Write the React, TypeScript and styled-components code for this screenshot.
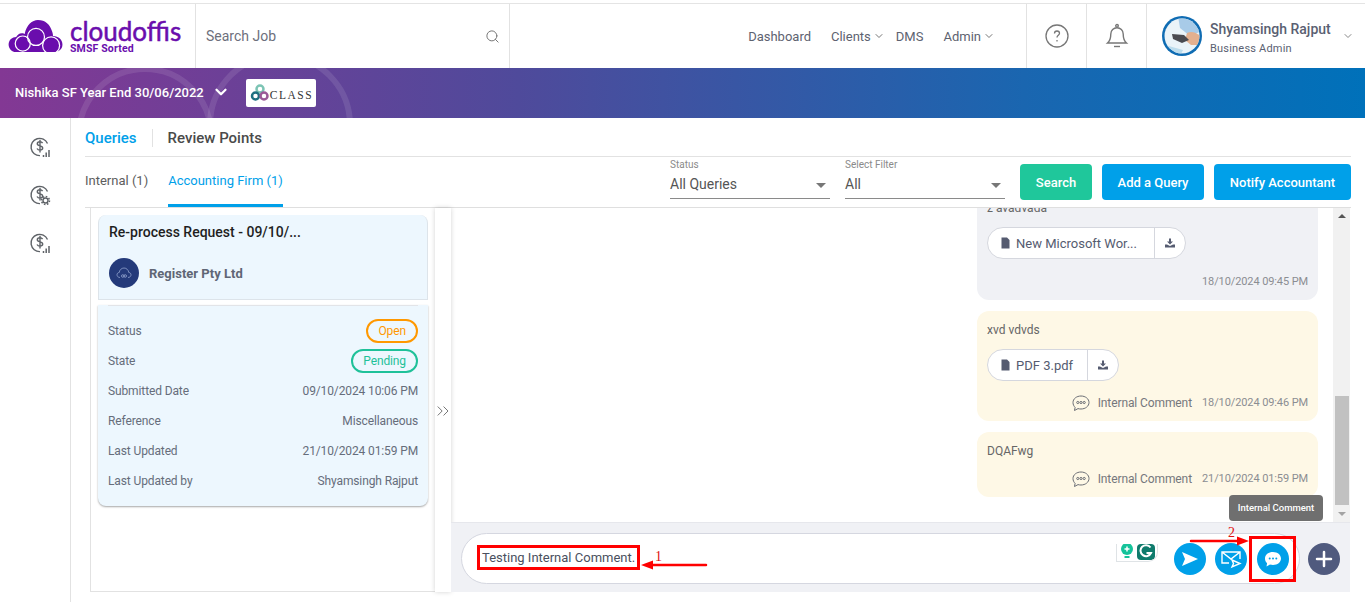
import React, { FC } from "react";
import styled, { createGlobalStyle } from "styled-components";
import { Search, ChevronDown, ChevronsRight, Plus } from "lucide-react";

const GlobalStyle = createGlobalStyle`
  html, body {
    margin: 0;
    padding: 0;
    background: #fff;
    font-family: Roboto, "Liberation Sans", sans-serif;
    overflow: hidden;
  }
  * { box-sizing: border-box; }
`;

const Page = styled.div`
  width: 1365px;
  height: 602px;
  display: flex;
  flex-direction: column;
  overflow: hidden;
`;

const Header = styled.header`
  margin-top: 3px;
  height: 65px;
  display: flex;
  border-top: 1px solid #e4e4e4;
  flex: none;
`;

const LogoCell = styled.div`
  width: 196px;
  padding: 14px 0 0 8px;
  display: flex;
  gap: 6px;
  border-right: 1px solid #e2e2e2;
`;

const LogoWords = styled.div`
  display: flex;
  flex-direction: column;
  margin-top: 1px;
`;

const LogoName = styled.div`
  font-family: Lato, sans-serif;
  font-size: 26px;
  font-weight: 400;
  line-height: 24px;
  color: #6a0dad;
  -webkit-text-stroke: 0.5px #6a0dad;
`;

const LogoTag = styled.div`
  font-size: 10.5px;
  font-weight: 700;
  line-height: 12px;
  color: #6a0dad;
  letter-spacing: 0.15px;
`;

const SearchCell = styled.div`
  width: 314px;
  padding: 0 9px 0 10px;
  display: flex;
  align-items: center;
  justify-content: space-between;
  border-right: 1px solid #e2e2e2;
  color: #6d6f7c;
  font-size: 14px;
`;

const Nav = styled.nav`
  flex: 1;
  display: flex;
  align-items: center;
  justify-content: flex-end;
  gap: 20px;
  padding-right: 40px;
  font-size: 13px;
  color: #5d6270;
`;

const NavItem = styled.span`
  display: inline-flex;
  align-items: center;
  gap: 2px;
`;

const NavChevron = styled(ChevronDown)`
  margin-right: -9px;
  color: #777;
`;

const IconCell = styled.div`
  width: 60px;
  flex: none;
  display: flex;
  align-items: center;
  justify-content: center;
  border-left: 1px solid #e2e2e2;
  color: #777;
`;

const UserCell = styled.div`
  width: 219px;
  flex: none;
  display: flex;
  align-items: center;
  padding-left: 15px;
  border-left: 1px solid #e2e2e2;
  gap: 8px;
  color: #5a5f72;
`;

const UserText = styled.div`
  display: flex;
  flex-direction: column;
  gap: 5px;
  width: 124px;
  margin-top: 4px;
`;

const UserName = styled.div`
  font-size: 14px;
  font-weight: 500;
  line-height: 16px;
  white-space: nowrap;
`;

const UserRole = styled.div`
  font-size: 11px;
  line-height: 13px;
  letter-spacing: 0.2px;
`;

const UserChevron = styled(ChevronDown)`
  color: #888;
`;

const Banner = styled.div`
  position: relative;
  height: 50px;
  flex: none;
  display: flex;
  align-items: center;
  padding-left: 15px;
  overflow: hidden;
  background: linear-gradient(90deg, #833894 0%, #4f4a9b 38%, #1a66b0 75%, #0071ba 100%);
`;

const BannerRings = styled.svg`
  position: absolute;
  left: 0;
  top: 0;
`;

const BannerTitle = styled.span`
  position: relative;
  margin-top: -2px;
  font-size: 13px;
  font-weight: 500;
  color: #fff;
`;

const BannerChevron = styled.span`
  position: relative;
  display: flex;
  margin: -2px 16px 0 8px;
  color: #fff;
`;

const ClassLogo = styled.div`
  position: relative;
  width: 70px;
  height: 28px;
  padding-left: 4px;
  display: flex;
  align-items: center;
  background: #fff;
  border-radius: 2px;
`;

const ClassWord = styled.span`
  font-family: "Liberation Serif", serif;
  font-size: 11.5px;
  letter-spacing: 1.5px;
  color: #333;
  margin-top: 4px;
`;

const Body = styled.div`
  flex: 1;
  display: flex;
  min-height: 0;
`;

const Sidebar = styled.aside`
  width: 71px;
  flex: none;
  padding: 18px 0 0 29px;
  display: flex;
  flex-direction: column;
  gap: 26px;
  border-right: 1px solid #e2e2e2;
`;

const Main = styled.main`
  flex: 1;
  min-width: 0;
  display: flex;
  flex-direction: column;
  padding: 0 14px 10px 14px;
`;

const TopTabs = styled.div`
  height: 39px;
  flex: none;
  display: flex;
  align-items: center;
  border-bottom: 1px solid #e2e2e2;
  font-size: 15px;
  font-weight: 500;
  padding-top: 1px;
`;

const TopTab = styled.span<{ $active?: boolean }>`
  color: ${(p) => (p.$active ? "#00a0e9" : "#4a4a4a")};
`;

const TabDivider = styled.span`
  width: 1px;
  height: 18px;
  margin: 0 15px;
  background: #e2e2e2;
`;

const FilterBar = styled.div`
  height: 51px;
  flex: none;
  display: flex;
  border-bottom: 1px solid #dfdfdf;
`;

const SubTab = styled.div<{ $active?: boolean }>`
  height: 50px;
  padding-top: 16px;
  margin-right: 20px;
  font-size: 13px;
  line-height: 16px;
  color: ${(p) => (p.$active ? "#00a0e9" : "#5d5d5d")};
  border-bottom: 3px solid ${(p) => (p.$active ? "#00a0e9" : "transparent")};
`;

const Filters = styled.div`
  margin-left: auto;
  display: flex;
  gap: 15px;
  padding-top: 1px;
`;

const Field = styled.div`
  width: 160px;
  height: 41px;
  padding-top: 1px;
  display: flex;
  flex-direction: column;
  border-bottom: 1px solid #8a8a8a;
`;

const FieldLabel = styled.div`
  font-size: 10px;
  line-height: 12px;
  color: #8a8a8a;
`;

const FieldValue = styled.div`
  margin-top: 4px;
  padding-right: 4px;
  display: flex;
  justify-content: space-between;
  align-items: center;
  font-size: 14px;
  line-height: 18px;
  color: #555;
`;

const Caret = styled.span`
  width: 0;
  height: 0;
  margin-top: 2px;
  border-left: 5px solid transparent;
  border-right: 5px solid transparent;
  border-top: 5px solid #777;
`;

const ActionButtons = styled.div`
  display: flex;
  gap: 10px;
  padding: 6px 0 0 0;
`;

const ActionButton = styled.button<{ $green?: boolean; $width: number }>`
  width: ${(p) => p.$width}px;
  height: 36px;
  border: 0;
  border-radius: 4px;
  background: ${(p) => (p.$green ? "#1fc79b" : "#00a0e9")};
  color: #fff;
  font-family: inherit;
  font-size: 13px;
  font-weight: 500;
  padding: 0;
`;

const Content = styled.div`
  flex: 1;
  min-height: 0;
  display: flex;
  padding: 0 1px 0 5px;
`;

const LeftPanel = styled.section`
  width: 345px;
  flex: none;
  padding: 7px 7px 0 7px;
  border-left: 1px solid #e2e2e2;
  border-bottom: 1px solid #e2e2e2;
`;

const CardHead = styled.div`
  height: 85px;
  padding: 10px 10px 0 10px;
  background: #edf7fe;
  border: 1px solid #dde4ea;
  border-top: 0;
  border-radius: 8px 8px 0 0;
`;

const CardTitle = styled.div`
  font-size: 14px;
  font-weight: 500;
  line-height: 14px;
  color: #1f1f1f;
`;

const Company = styled.div`
  margin-top: 19px;
  display: flex;
  align-items: center;
  gap: 10px;
  font-size: 13px;
  font-weight: 700;
  color: #5f6675;
`;

const CompanyBadge = styled.div`
  width: 30px;
  height: 30px;
  border-radius: 50%;
  background: #243a7a;
  display: flex;
  align-items: center;
  justify-content: center;
`;

const CardDetails = styled.div`
  margin-top: 5px;
  height: 201px;
  padding: 11px 10px 0;
  background: #edf7fe;
  border-radius: 0 0 8px 8px;
  box-shadow: 0 1px 2px rgba(0, 0, 0, 0.35);
  position: relative;

  &::before {
    content: "";
    position: absolute;
    left: 10px;
    right: 10px;
    top: 0;
    height: 1px;
    background: #e2e4e8;
  }
`;

const DetailRow = styled.div`
  height: 30px;
  display: flex;
  align-items: center;
  justify-content: space-between;
  font-size: 12px;
  letter-spacing: -0.12px;
  color: #666d7b;
`;

const Pill = styled.span<{ $color: string }>`
  height: 24px;
  padding: 0 10px;
  display: inline-flex;
  align-items: center;
  border: 2px solid ${(p) => p.$color};
  border-radius: 12px;
  color: ${(p) => p.$color};
`;

const Collapser = styled.div`
  width: 16px;
  flex: none;
  padding-top: 193px;
  display: flex;
  justify-content: center;
  color: #777;
  background: #fff;
  box-shadow: 0 0 5px rgba(0, 0, 0, 0.18);
  position: relative;
`;

const CollapseIcon = styled(ChevronsRight)`
  flex: none;
`;

const ChatPanel = styled.section`
  flex: 1;
  min-width: 0;
  display: flex;
  flex-direction: column;
  position: relative;
`;

const ChatScroll = styled.div`
  flex: 1;
  min-height: 0;
  display: flex;
`;

const Messages = styled.div`
  flex: 1;
  min-width: 0;
  padding: 0 15px 25px 0;
  display: flex;
  flex-direction: column;
  justify-content: flex-end;
  align-items: flex-end;
  gap: 11px;
  overflow: hidden;
`;

const Bubble = styled.div<{ $tone: "grey" | "yellow"; $height: number }>`
  width: 341px;
  height: ${(p) => p.$height}px;
  flex: none;
  padding: 12px 10px 0;
  border-radius: 12px;
  background: ${(p) => (p.$tone === "grey" ? "#f0f1f5" : "#fef8e6")};
  display: flex;
  flex-direction: column;
  font-size: 12px;
  color: #666;
`;

const BubbleText = styled.div`
  line-height: 14px;
`;

const Attachment = styled.div`
  margin-top: 12px;
  height: 32px;
  align-self: flex-start;
  display: flex;
  background: #fff;
  border: 1px solid #d5d7de;
  border-radius: 16px;
  font-size: 13px;
  color: #555b70;
`;

const AttachmentName = styled.div<{ $clipped?: boolean }>`
  padding: 0 ${(p) => (p.$clipped ? 17.5 : 14)}px 0 11px;
  display: flex;
  align-items: center;
  gap: 4px;
  white-space: nowrap;
`;

const AttachmentAction = styled.div`
  width: 31px;
  display: flex;
  align-items: center;
  justify-content: center;
  border-left: 1px solid #d5d7de;
`;

const BubbleFooter = styled.div`
  margin-top: auto;
  margin-bottom: 11px;
  height: 14px;
  display: flex;
  justify-content: flex-end;
  align-items: center;
  font-size: 11px;
  line-height: 14px;
  letter-spacing: -0.1px;
  color: #8b8d92;
`;

const CommentTag = styled.span`
  display: inline-flex;
  align-items: center;
  gap: 8px;
  margin-right: 10px;
  font-size: 12px;
  color: #75777c;
`;

const Scrollbar = styled.div`
  width: 17px;
  flex: none;
  display: flex;
  flex-direction: column;
  align-items: center;
  background: #f1f1f1;
  padding: 6px 0;
`;

const ScrollArrow = styled.span<{ $up?: boolean }>`
  width: 0;
  height: 0;
  border-left: 4px solid transparent;
  border-right: 4px solid transparent;
  ${(p) => (p.$up ? "border-bottom: 4px solid #555;" : "border-top: 4px solid #a3a3a3;")}
`;

const ScrollThumb = styled.div`
  width: 14px;
  height: 109px;
  margin-top: auto;
  margin-bottom: 7px;
  background: #c1c1c1;
`;

const Composer = styled.div`
  height: 70px;
  flex: none;
  padding: 10px 10px 8px;
  display: flex;
  align-items: stretch;
  gap: 8px;
  background: #f0f1f5;
  border-top: 1px solid #e6e7ec;
`;

const InputBox = styled.div`
  flex: 1;
  display: flex;
  align-items: center;
  padding: 1px 3px 0 15px;
  background: #fff;
  border: 1px solid #d5d7e0;
  border-radius: 26px;
`;

const TypedText = styled.span`
  margin-top: -3px;
  border: 3px solid #f00;
  height: 25px;
  padding: 0 2px 0 2px;
  display: flex;
  align-items: center;
  font-size: 13px;
  color: #4a5060;
  white-space: nowrap;
`;

const Grammarly = styled.div`
  width: 42px;
  height: 18px;
  margin: -12px 16px 0 auto;
  display: flex;
  align-items: flex-start;
  justify-content: center;
  gap: 3px;
  border: 1px solid #dfe3e6;
  border-top: 0;
  border-radius: 0 0 10px 0;
  overflow: hidden;
`;

const RoundButton = styled.button<{ $color?: string }>`
  width: 32px;
  height: 32px;
  flex: none;
  padding: 0;
  border: 0;
  border-radius: 50%;
  display: flex;
  align-items: center;
  justify-content: center;
  color: #fff;
  background: ${(p) => p.$color || "#00a0e9"};
`;

const ComposerActions = styled.div`
  display: flex;
  align-items: center;
  gap: 9px;
`;

const Highlight = styled.div`
  width: 47px;
  height: 46px;
  margin-left: -7px;
  display: flex;
  align-items: center;
  justify-content: center;
  border: 3px solid #f00;
`;

const PlusSlot = styled.div`
  display: flex;
  align-items: center;
`;

const Tooltip = styled.div`
  position: absolute;
  right: 27px;
  bottom: 71px;
  width: 94px;
  height: 26px;
  padding-bottom: 2px;
  display: flex;
  align-items: center;
  justify-content: center;
  border-radius: 4px;
  background: #6f6f6f;
  color: #fff;
  font-size: 9.5px;
  font-weight: 500;
`;

const ArrowMark = styled.svg<{ $left: number; $bottom: number }>`
  position: absolute;
  left: ${(p) => p.$left}px;
  bottom: ${(p) => p.$bottom}px;
  overflow: visible;
`;

const MarkNumber = styled.span<{ $left: number; $bottom: number }>`
  position: absolute;
  left: ${(p) => p.$left}px;
  bottom: ${(p) => p.$bottom}px;
  font-family: "Liberation Serif", serif;
  font-size: 14px;
  line-height: 14px;
  color: #e01010;
`;

const DollarIcon: FC<{ gear?: boolean }> = ({ gear }) => (
  <svg width="22" height="22" viewBox="0 0 22 22" fill="none" stroke="#5f6368" strokeWidth="1.4">
    <path d="M18.5 7.5A8.6 8.6 0 1 0 11 19.6" />
    <path d="M13.6 7.2c-.6-1-1.5-1.4-2.7-1.4-1.500 0-2.600.8-2.600 2 0 2.800 5.400 1.400 5.400 4.200 0 1.300-1.200 2.100-2.800 2.100-1.300 0-2.300-.6-2.900-1.600M11 3.800v12.600" />
    {gear ? (
      <g>
        <circle cx="16.500" cy="16.500" r="2.500" />
        <circle cx="16.500" cy="16.500" r="4" strokeDasharray="1.600 1.500" strokeWidth="1.500" />
      </g>
    ) : (
      <path d="M14.500 21v-2M17.200 21v-4.500M20 21v-7" strokeWidth="1.500" />
    )}
  </svg>
);

const CloudLogo: FC = () => (
  <svg width="56" height="34" viewBox="0 0 58 36" style={{ flex: "none", marginTop: 1 }}>
    <path
      fill="#6a0dad"
      d="M8 35C3 35 0 31 0 27c0-5 4-8 8-8 1-2 3-4 6-4 1 0 2 0 3 1C19 6 25 1 31 1c8 0 13 5 15 12 1 3 1 4 1 5 6 0 10 4 10 9s-4 8-9 8z"
    />
    <g fill="none" stroke="#fff" strokeWidth="1.300">
      <circle cx="15" cy="26" r="8" />
      <circle cx="29" cy="19" r="9" />
      <circle cx="45" cy="28" r="9" />
    </g>
  </svg>
);

const BellIcon: FC = () => (
  <svg width="26" height="26" viewBox="0 0 26 26" fill="none" stroke="#777" strokeWidth="1.4">
    <circle cx="13" cy="2.800" r="1.300" />
    <path d="M3.500 20c2.300-2 3.300-4.500 3.300-9a6.200 6.200 0 0 1 12.400 0c0 4.500 1 7 3.300 9z" />
    <path d="M10 23.500h6" />
  </svg>
);

const Avatar: FC = () => (
  <svg width="40" height="40" viewBox="0 0 40 40" style={{ flex: "none" }}>
    <defs>
      <clipPath id="avatarClip">
        <circle cx="20" cy="20" r="17.500" />
      </clipPath>
    </defs>
    <circle cx="20" cy="20" r="20" fill="#0f6cb3" />
    <circle cx="20" cy="20" r="17.500" fill="#eaf3f8" />
    <g clipPath="url(#avatarClip)">
      <path d="M16 0h24v15l-12 5-10-8z" fill="#a8cbe8" />
      <path d="M25 17c4-2 9-1 13 3v9H29l-6-5z" fill="#e3b08f" />
      <path d="M10 18l12 1 5 5-7 3-9-4z" fill="#4a4a50" />
      <path d="M3 29l18 5-3 6H3z" fill="#bcdcec" />
    </g>
  </svg>
);

const CommentBubbleIcon: FC = () => (
  <svg width="18" height="18" viewBox="0 0 18 18" fill="none" stroke="#6b6e75" strokeWidth="1">
    <path d="M9 2c4.400 0 8 2.800 8 6.500S13.400 15 9 15c-1 0-2-.1-3-.4L2.500 16.500l.6-3.200C1.800 12.200 1 10.500 1 8.500 1 4.800 4.600 2 9 2z" />
    <circle cx="5.800" cy="8.500" r="1.100" />
    <circle cx="9" cy="8.500" r="1.100" />
    <circle cx="12.200" cy="8.500" r="1.100" />
  </svg>
);

const DownloadIcon: FC = () => (
  <svg width="12" height="12" viewBox="0 0 12 12" fill="#555b70">
    <path d="M5 1.500h2v3h2L6 7.500 3 4.500h2z" />
    <path d="M1 7.500h2L6 9l3-1.500h2V10.500H1z" />
  </svg>
);

const FileIcon: FC = () => (
  <svg width="13" height="12" viewBox="0 0 13 12" fill="#555b70">
    <path d="M2.500 0.500h5.500l2.500 2.500v8.500h-8z" />
  </svg>
);

const Messenger: FC = () => (
  <Messages>
    <Bubble $tone="grey" $height={111}>
      <BubbleText>z avadvada</BubbleText>
      <Attachment>
        <AttachmentName $clipped>
          <FileIcon />
          New Microsoft Wor...
        </AttachmentName>
        <AttachmentAction>
          <DownloadIcon />
        </AttachmentAction>
      </Attachment>
      <BubbleFooter>18/10/2024 09:45 PM</BubbleFooter>
    </Bubble>
    <Bubble $tone="yellow" $height={110}>
      <BubbleText>xvd vdvds</BubbleText>
      <Attachment>
        <AttachmentName>
          <FileIcon />
          PDF 3.pdf
        </AttachmentName>
        <AttachmentAction>
          <DownloadIcon />
        </AttachmentAction>
      </Attachment>
      <BubbleFooter>
        <CommentTag>
          <CommentBubbleIcon />
          Internal Comment
        </CommentTag>
        18/10/2024 09:46 PM
      </BubbleFooter>
    </Bubble>
    <Bubble $tone="yellow" $height={65}>
      <BubbleText>DQAFwg</BubbleText>
      <BubbleFooter>
        <CommentTag>
          <CommentBubbleIcon />
          Internal Comment
        </CommentTag>
        21/10/2024 01:59 PM
      </BubbleFooter>
    </Bubble>
  </Messages>
);

const App: FC = () => {
  const details: [string, string][] = [
    ["Submitted Date", "09/10/2024 10:06 PM"],
    ["Reference", "Miscellaneous"],
    ["Last Updated", "21/10/2024 01:59 PM"],
    ["Last Updated by", "Shyamsingh Rajput"],
  ];

  return (
    <Page>
      <GlobalStyle />
      <Header>
        <LogoCell>
          <CloudLogo />
          <LogoWords>
            <LogoName>cloudoffis</LogoName>
            <LogoTag>SMSF Sorted</LogoTag>
          </LogoWords>
        </LogoCell>
        <SearchCell>
          Search Job
          <Search size={15} color="#777" strokeWidth={1.6} />
        </SearchCell>
        <Nav>
          <NavItem>Dashboard</NavItem>
          <NavItem>
            Clients
            <NavChevron size={12} />
          </NavItem>
          <NavItem>DMS</NavItem>
          <NavItem>
            Admin
            <NavChevron size={12} />
          </NavItem>
        </Nav>
        <IconCell>
          <svg width="24" height="24" viewBox="0 0 24 24" fill="none" stroke="#777" strokeWidth="1.300">
            <circle cx="12" cy="12" r="11" />
            <path d="M9.500 9.500c0-1.500 1-2.500 2.500-2.500s2.500 1 2.500 2.300c0 2-2.500 2-2.500 4.200M12 16v1.500" />
          </svg>
        </IconCell>
        <IconCell>
          <BellIcon />
        </IconCell>
        <UserCell>
          <Avatar />
          <UserText>
            <UserName>Shyamsingh Rajput</UserName>
            <UserRole>Business Admin</UserRole>
          </UserText>
          <UserChevron size={12} />
        </UserCell>
      </Header>

      <Banner>
        <BannerRings width="400" height="50" fill="none" stroke="rgba(255,255,255,0.1)" strokeWidth="6">
          <circle cx="145" cy="67" r="66" />
          <circle cx="280" cy="57" r="70" />
        </BannerRings>
        <BannerTitle>Nishika SF Year End 30/06/2022</BannerTitle>
        <BannerChevron>
          <ChevronDown size={18} strokeWidth={3} />
        </BannerChevron>
        <ClassLogo>
          <svg width="20" height="20" viewBox="0 0 20 20" fill="none" strokeWidth="2.500">
            <circle cx="10" cy="6" r="3.500" stroke="#7cc4b4" />
            <circle cx="5.500" cy="13" r="3.500" stroke="#1d6f80" />
            <circle cx="14" cy="13" r="3.500" stroke="#9a5a96" />
          </svg>
          <ClassWord>CLASS</ClassWord>
        </ClassLogo>
      </Banner>

      <Body>
        <Sidebar>
          <DollarIcon />
          <DollarIcon gear />
          <DollarIcon />
        </Sidebar>
        <Main>
          <TopTabs>
            <TopTab $active>Queries</TopTab>
            <TabDivider />
            <TopTab>Review Points</TopTab>
          </TopTabs>
          <FilterBar>
            <SubTab>Internal (1)</SubTab>
            <SubTab $active>Accounting Firm (1)</SubTab>
            <Filters>
              <Field>
                <FieldLabel>Status</FieldLabel>
                <FieldValue>
                  All Queries
                  <Caret />
                </FieldValue>
              </Field>
              <Field>
                <FieldLabel>Select Filter</FieldLabel>
                <FieldValue>
                  All
                  <Caret />
                </FieldValue>
              </Field>
              <ActionButtons>
                <ActionButton $green $width={72}>Search</ActionButton>
                <ActionButton $width={102}>Add a Query</ActionButton>
                <ActionButton $width={137}>Notify Accountant</ActionButton>
              </ActionButtons>
            </Filters>
          </FilterBar>
          <Content>
            <LeftPanel>
              <CardHead>
                <CardTitle>Re-process Request - 09/10/...</CardTitle>
                <Company>
                  <CompanyBadge>
                    <svg width="16" height="12" viewBox="0 0 16 12" fill="none" stroke="#9fb0d8" strokeWidth="0.700">
                      <path d="M4 10.500C2 10.500 1 9 1 7.800 1 6.500 2 5.500 3.200 5.500 3.500 3 5.500 1 8 1s4.500 2 4.800 4.500C14 5.500 15 6.500 15 7.800c0 1.300-1 2.700-3 2.700" />
                      <circle cx="6.800" cy="9" r="1.300" />
                      <circle cx="9.200" cy="9" r="1.300" />
                    </svg>
                  </CompanyBadge>
                  Register Pty Ltd
                </Company>
              </CardHead>
              <CardDetails>
                <DetailRow>
                  Status
                  <Pill $color="#ff9800">Open</Pill>
                </DetailRow>
                <DetailRow>
                  State
                  <Pill $color="#1fc199">Pending</Pill>
                </DetailRow>
                {details.map(([label, value]) => (
                  <DetailRow key={label}>
                    <span>{label}</span>
                    <span>{value}</span>
                  </DetailRow>
                ))}
              </CardDetails>
            </LeftPanel>
            <Collapser>
              <CollapseIcon size={20} strokeWidth={1.2} />
            </Collapser>
            <ChatPanel>
              <ChatScroll>
                <Messenger />
                <Scrollbar>
                  <ScrollArrow $up />
                  <ScrollThumb />
                  <ScrollArrow />
                </Scrollbar>
              </ChatScroll>
              <Composer>
                <InputBox>
                  <TypedText>Testing Internal Comment.</TypedText>
                  <Grammarly>
                    <svg width="14" height="16" viewBox="0 0 14 16">
                      <circle cx="7" cy="5" r="6" fill="#15c39a" />
                      <path d="M7 2.500v5M4.500 5h5" stroke="#fff" strokeWidth="1.500" />
                      <path d="M4.500 13h5" stroke="#15c39a" strokeWidth="2" />
                    </svg>
                    <svg width="18" height="16" viewBox="0 0 18 16">
                      <rect width="18" height="16" rx="4" fill="#0f7b6c" />
                      <path d="M13.500 3.500A5.500 5.500 0 1 0 14 9H9.500" fill="none" stroke="#fff" strokeWidth="2" />
                    </svg>
                  </Grammarly>
                  <ComposerActions>
                    <RoundButton>
                      <svg width="18" height="18" viewBox="0 0 18 18" fill="#fff">
                        <path d="M1 2l16 7-16 7 3-7z" />
                      </svg>
                    </RoundButton>
                    <RoundButton>
                      <svg width="22" height="20" viewBox="0 0 22 20" fill="none" stroke="#fff" strokeWidth="1.400">
                        <path d="M9 14H2V3h18v7M2 3l9 7 9-7" />
                        <path d="M12 11l8 3.500-8 3.500 1.500-3.500z" />
                      </svg>
                    </RoundButton>
                    <Highlight>
                      <RoundButton>
                        <svg width="18" height="18" viewBox="0 0 18 18" fill="#fff">
                          <path d="M9 2c4.400 0 8 2.800 8 6.500S13.400 15 9 15c-1 0-2-.1-3-.4L2.500 16.500l.6-3.200C1.800 12.200 1 10.500 1 8.500 1 4.800 4.600 2 9 2z" />
                          <circle cx="5.700" cy="8.500" r="1" fill="#00a0e9" />
                          <circle cx="9" cy="8.500" r="1" fill="#00a0e9" />
                          <circle cx="12.300" cy="8.500" r="1" fill="#00a0e9" />
                        </svg>
                      </RoundButton>
                    </Highlight>
                  </ComposerActions>
                </InputBox>
                <PlusSlot>
                  <RoundButton $color="#505a7e">
                    <Plus size={24} strokeWidth={2.500} />
                  </RoundButton>
                </PlusSlot>
              </Composer>
              <Tooltip>Internal Comment</Tooltip>
              <ArrowMark $left={190} $bottom={22} width="67" height="10" viewBox="0 0 67 10">
                <path d="M65 5H10" stroke="#f00" strokeWidth="2.500" strokeLinecap="round" />
                <path d="M0 5l12-4.500v9z" fill="#f00" />
              </ArrowMark>
              <MarkNumber $left={204} $bottom={28}>1</MarkNumber>
              <ArrowMark $left={740} $bottom={46} width="58" height="10" viewBox="0 0 58 10">
                <path d="M0 5h48" stroke="#f00" strokeWidth="2.500" strokeLinecap="round" />
                <path d="M58 5l-12-4.500v9z" fill="#f00" />
              </ArrowMark>
              <MarkNumber $left={777} $bottom={52}>2</MarkNumber>
            </ChatPanel>
          </Content>
        </Main>
      </Body>
    </Page>
  );
};

export default App;
